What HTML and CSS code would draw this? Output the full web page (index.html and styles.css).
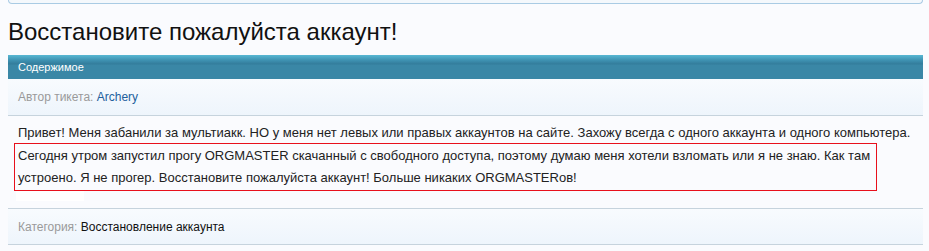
FILE: index.html
```html
<html>
<head>
<link rel="stylesheet" href="styles.css">
<meta charset="UTF-8">
<title>Восстановите пожалуйста аккаунт!</title>
</head>
<body>
  <div class="page">
    <div class="topbox"></div>
    <h1 class="title">Восстановите пожалуйста аккаунт!</h1>
    <div class="block">
      <div class="blockHead">Содержимое</div>
      <div class="infoRow">
        <span class="label">Автор тикета:</span> <a class="author" href="#">Archery</a>
      </div>
      <div class="message">
        <div class="line">Привет! Меня забанили за мультиакк. НО у меня нет левых или правых аккаунтов на сайте. Захожу всегда с одного аккаунта и одного компьютера.</div>
        <div class="marked">Сегодня утром запустил прогу ORGMASTER скачанный с свободного доступа, поэтому думаю меня хотели взломать или я не знаю. Как там<br>устроено. Я не прогер. Восстановите пожалуйста аккаунт! Больше никаких ORGMASTERов!</div>
        <div class="blank"></div>
      </div>
      <div class="infoRow">
        <span class="label">Категория:</span> <span class="value">Восстановление аккаунта</span>
      </div>
    </div>
  </div>
</body>
</html>
```

FILE: styles.css
```css
* {
  box-sizing: border-box;
}

body {
  margin: 0;
  background-color: #fafbfe;
  font-family: "Liberation Sans", Arial, sans-serif;
  color: #222222;
}

.page {
  margin-left: 8px;
  width: 915px;
}

/* bottom of the box above, cut off by the window */
.topbox {
  height: 4px;
  width: 915px;
  border: solid 1px #a9cbe4;
  border-top: none;
  border-radius: 0 0 5px 5px;
  background-color: #f4f8fc;
}

.title {
  margin: 0;
  padding-top: 12px;
  height: 51px;
  font-size: 24px;
  font-weight: normal;
  line-height: 32px;
  color: #111111;
}

.blockHead {
  height: 24px;
  padding-left: 10px;
  font-size: 11px;
  line-height: 24px;
  color: #ffffff;
  background: linear-gradient(to bottom, #58b8d3 0px, #3f93b3 5px, #337c9b 9px, #3a87a6 10px, #3a87a6 24px);
}

.infoRow {
  height: 37px;
  padding-left: 10px;
  font-size: 12px;
  line-height: 36px;
  background: linear-gradient(to bottom, #f8fbfe, #eef5fc);
  border-bottom: solid 1px #c6d3dd;
}

.message + .infoRow {
  border-top: solid 1px #c6d3dd;
}

.label {
  color: #9a9a9a;
}

.author {
  color: #22609c;
  text-decoration: none;
}

.value {
  color: #111111;
}

.message {
  padding-top: 7px;
  padding-left: 6px;
  height: 92px;
  font-size: 13px;
  line-height: 22px;
  color: #222222;
}

.line {
  padding-left: 4px;
  height: 20px;
  line-height: 20px;
}

.marked {
  width: 863px;
  height: 48px;
  padding-left: 3px;
  padding-top: 1px;
  border: solid 1px #e8101c;
}

.blank {
  margin-left: 2px;
  width: 68px;
  height: 10px;
  background-color: #ffffff;
}
```
